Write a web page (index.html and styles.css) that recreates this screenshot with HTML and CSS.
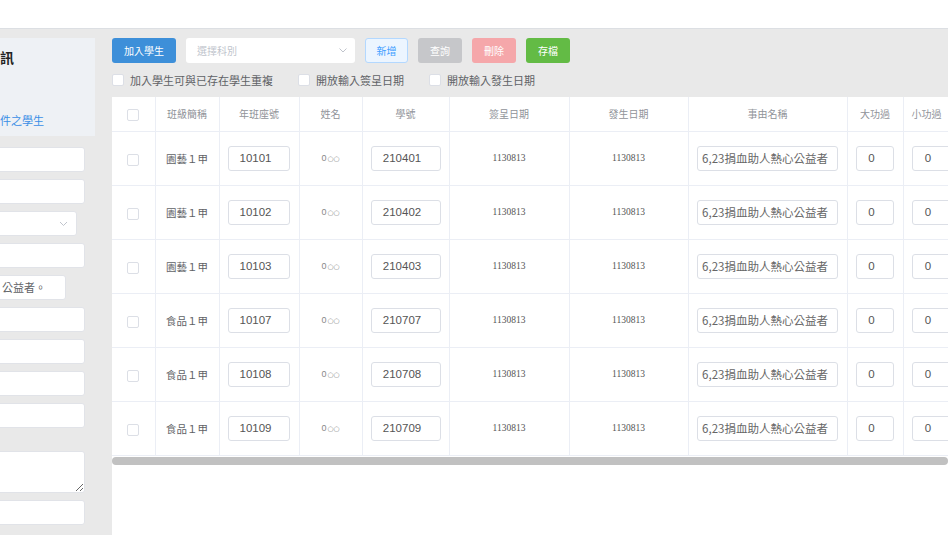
FILE: index.html
```html
<!DOCTYPE html>
<html lang="zh-Hant">
<head>
    <meta charset="UTF-8">
    <meta name="viewport" content="width=device-width, initial-scale=1.0">
    <title>獎懲登錄</title>
    <link rel="stylesheet" href="styles.css">
</head>
<body>
    <div class="topbar"></div>

    <div class="page">
        <aside class="side">
            <div class="side-inner">
                <div class="info-box">
                    <h3 class="info-title">訊</h3>
                    <a class="info-link" href="#">件之學生</a>
                </div>

                <div class="form">
                    <input class="field" type="text">
                    <input class="field" type="text">
                    <div class="field field-select">
                        <svg class="chev" width="9" height="6" viewBox="0 0 9 6"><polyline points="1,1 4.5,4.5 8,1" fill="none" stroke="#c0c4cc" stroke-width="1"/></svg>
                    </div>
                    <input class="field" type="text">
                    <div class="field field-short">公益者。</div>
                    <input class="field" type="text">
                    <input class="field" type="text">
                    <input class="field" type="text">
                    <input class="field" type="text">
                    <textarea class="field field-area"></textarea>
                    <input class="field" type="text">
                </div>
            </div>
        </aside>

        <main class="main">
            <div class="toolbar">
                <button class="btn btn-primary">加入學生</button>
                <div class="select">
                    <span>選擇科別</span>
                    <svg width="8" height="5" viewBox="0 0 8 5"><polyline points="0.5,0.5 4,4 7.5,0.5" fill="none" stroke="#c0c4cc" stroke-width="1"/></svg>
                </div>
                <button class="btn btn-plain">新增</button>
                <button class="btn btn-gray">查詢</button>
                <button class="btn btn-red">刪除</button>
                <button class="btn btn-green">存檔</button>
            </div>

            <div class="options">
                <label class="opt"><span class="check"></span>加入學生可與已存在學生重複</label>
                <label class="opt"><span class="check"></span>開放輸入簽呈日期</label>
                <label class="opt"><span class="check"></span>開放輸入發生日期</label>
            </div>

            <div class="table-wrap">
                <div class="table-scroll">
                    <table class="grid">
                        <colgroup>
                            <col style="width:43px"><col style="width:64px"><col style="width:80px">
                            <col style="width:63px"><col style="width:87px"><col style="width:120px">
                            <col style="width:119px"><col style="width:159px"><col style="width:56px">
                            <col style="width:70px">
                        </colgroup>
                        <thead>
                            <tr>
                                <th><span class="check"></span></th>
                                <th>班級簡稱</th>
                                <th>年班座號</th>
                                <th>姓名</th>
                                <th>學號</th>
                                <th>簽呈日期</th>
                                <th>發生日期</th>
                                <th>事由名稱</th>
                                <th>大功過</th>
                                <th class="left">小功過</th>
                            </tr>
                        </thead>
                        <tbody>
                            <tr>
                                <td><span class="check"></span></td>
                                <td>園藝１甲</td>
                                <td><input class="cell-in w-seat" value="10101"></td>
                                <td class="name">0<span class="oo">○○</span></td>
                                <td><input class="cell-in w-id" value="210401"></td>
                                <td class="date">1130813</td>
                                <td class="date">1130813</td>
                                <td><input class="cell-in w-reason" value="6,23捐血助人熱心公益者"></td>
                                <td><input class="cell-in w-num" value="0"></td>
                                <td class="left"><input class="cell-in w-num2" value="0"></td>
                            </tr>
                            <tr>
                                <td><span class="check"></span></td>
                                <td>園藝１甲</td>
                                <td><input class="cell-in w-seat" value="10102"></td>
                                <td class="name">0<span class="oo">○○</span></td>
                                <td><input class="cell-in w-id" value="210402"></td>
                                <td class="date">1130813</td>
                                <td class="date">1130813</td>
                                <td><input class="cell-in w-reason" value="6,23捐血助人熱心公益者"></td>
                                <td><input class="cell-in w-num" value="0"></td>
                                <td class="left"><input class="cell-in w-num2" value="0"></td>
                            </tr>
                            <tr>
                                <td><span class="check"></span></td>
                                <td>園藝１甲</td>
                                <td><input class="cell-in w-seat" value="10103"></td>
                                <td class="name">0<span class="oo">○○</span></td>
                                <td><input class="cell-in w-id" value="210403"></td>
                                <td class="date">1130813</td>
                                <td class="date">1130813</td>
                                <td><input class="cell-in w-reason" value="6,23捐血助人熱心公益者"></td>
                                <td><input class="cell-in w-num" value="0"></td>
                                <td class="left"><input class="cell-in w-num2" value="0"></td>
                            </tr>
                            <tr>
                                <td><span class="check"></span></td>
                                <td>食品１甲</td>
                                <td><input class="cell-in w-seat" value="10107"></td>
                                <td class="name">0<span class="oo">○○</span></td>
                                <td><input class="cell-in w-id" value="210707"></td>
                                <td class="date">1130813</td>
                                <td class="date">1130813</td>
                                <td><input class="cell-in w-reason" value="6,23捐血助人熱心公益者"></td>
                                <td><input class="cell-in w-num" value="0"></td>
                                <td class="left"><input class="cell-in w-num2" value="0"></td>
                            </tr>
                            <tr>
                                <td><span class="check"></span></td>
                                <td>食品１甲</td>
                                <td><input class="cell-in w-seat" value="10108"></td>
                                <td class="name">0<span class="oo">○○</span></td>
                                <td><input class="cell-in w-id" value="210708"></td>
                                <td class="date">1130813</td>
                                <td class="date">1130813</td>
                                <td><input class="cell-in w-reason" value="6,23捐血助人熱心公益者"></td>
                                <td><input class="cell-in w-num" value="0"></td>
                                <td class="left"><input class="cell-in w-num2" value="0"></td>
                            </tr>
                            <tr>
                                <td><span class="check"></span></td>
                                <td>食品１甲</td>
                                <td><input class="cell-in w-seat" value="10109"></td>
                                <td class="name">0<span class="oo">○○</span></td>
                                <td><input class="cell-in w-id" value="210709"></td>
                                <td class="date">1130813</td>
                                <td class="date">1130813</td>
                                <td><input class="cell-in w-reason" value="6,23捐血助人熱心公益者"></td>
                                <td><input class="cell-in w-num" value="0"></td>
                                <td class="left"><input class="cell-in w-num2" value="0"></td>
                            </tr>
                        </tbody>
                    </table>
                </div>
                <div class="scroll-bar"></div>
            </div>
        </main>
    </div>
</body>
</html>
```

FILE: styles.css
```css
*{
    margin: 0;
    padding: 0;
    box-sizing: border-box;
}

body{
    height: 535px;
    overflow: hidden;
    background-color: #e9e9e9;
    color: #606266;
    font-family: "Noto Sans CJK TC", "Noto Sans", sans-serif;
}

.topbar{
    height: 29px;
    background-color: #fff;
    border-bottom: 1px solid #dcdfe3;
}

.page{
    display: flex;
    height: 506px;
}

/* left column, scrolled so only its right edge shows */
.side{
    width: 112px;
    flex: none;
    overflow: hidden;
    padding-top: 9px;
}

.side-inner{
    width: 300px;
    margin-left: -205px;
}

.info-box{
    height: 98px;
    background-color: #eef1f5;
    padding-top: 9px;
}

.info-title{
    font-size: 14px;
    line-height: 20px;
    font-weight: bold;
    color: #222;
    text-align: right;
    padding-right: 81px;
}

.info-link{
    display: block;
    margin-top: 45px;
    padding-right: 51px;
    font-size: 11px;
    line-height: 16px;
    color: #3a8ee6;
    text-align: right;
    text-decoration: none;
}

.form{
    display: flex;
    flex-direction: column;
    padding-top: 11px;
}

.field{
    display: block;
    width: 290px;
    height: 25px;
    margin-bottom: 7px;
    background-color: #fff;
    border: 1px solid #e1e3e8;
    border-radius: 3px;
    font-family: "Noto Sans CJK TC", sans-serif;
    font-size: 11px;
    color: #606266;
    outline: none;
}

.field-select{
    width: 282px;
    display: flex;
    align-items: center;
    justify-content: flex-end;
    padding-right: 8px;
}

.field-short{
    width: 271px;
    text-align: right;
    padding-right: 19px;
    line-height: 23px;
}

.field-area{
    height: 42px;
    margin-top: 16px;
    resize: vertical;
}

/* main area */
.main{
    flex: 1;
    min-width: 0;
    padding-top: 9px;
    display: flex;
    flex-direction: column;
}

.toolbar{
    display: flex;
    align-items: center;
    gap: 10px;
    height: 25px;
}

.btn{
    height: 25px;
    width: 44px;
    border: 1px solid transparent;
    border-radius: 3px;
    font-family: "Noto Sans CJK TC", sans-serif;
    font-size: 10px;
    color: #fff;
    cursor: pointer;
}

.btn-primary{
    width: 64px;
    background-color: #3d8fd9;
}

.btn-plain{
    width: 43px;
    background-color: #ecf5ff;
    border-color: #b3d8ff;
    color: #409eff;
}

.btn-gray{
    background-color: #c6c7ca;
}

.btn-red{
    background-color: #f5a7aa;
}

.btn-green{
    background-color: #63bb45;
}

.select{
    width: 169px;
    height: 25px;
    display: flex;
    align-items: center;
    justify-content: space-between;
    padding: 0 8px 0 11px;
    background-color: #fff;
    border-radius: 3px;
    font-size: 10px;
    color: #c0c4cc;
}

.options{
    display: flex;
    align-items: center;
    gap: 25px;
    height: 14px;
    margin-top: 10px;
    font-size: 11px;
    color: #606266;
}

.opt{
    display: flex;
    align-items: center;
    gap: 6px;
}

.check{
    display: inline-block;
    width: 12px;
    height: 12px;
    background-color: #fff;
    border: 1px solid #dcdfe6;
    border-radius: 2px;
    vertical-align: middle;
}

.table-wrap{
    flex: 1;
    margin-top: 10px;
    background-color: #fff;
    overflow: hidden;
}

.table-scroll{
    overflow: hidden;
}

.grid{
    border-collapse: collapse;
    table-layout: fixed;
    width: 861px;
}

.grid th,
.grid td{
    border-right: 1px solid #ebeef5;
    border-bottom: 1px solid #ebeef5;
    text-align: center;
    vertical-align: middle;
}

.grid th{
    height: 34px;
    font-size: 10px;
    font-weight: normal;
    color: #909399;
}

.grid td{
    height: 54px;
    font-size: 10.5px;
    color: #606266;
}

.grid .left{
    text-align: left;
    padding-left: 8px;
}

.grid td.name{
    font-family: "Liberation Sans", sans-serif;
    font-size: 9px;
    color: #888;
}

.grid td.name .oo{
    font-family: "DejaVu Sans", sans-serif;
    font-size: 7px;
    margin-left: 1px;
}

.grid td.date{
    font-family: "Liberation Serif", serif;
    font-size: 9.5px;
    color: #555;
}

.cell-in{
    height: 25px;
    border: 1px solid #dcdfe6;
    border-radius: 3px;
    padding: 0 8px 0 1px;
    text-align: center;
    font-family: "Liberation Sans", "Noto Sans CJK TC", sans-serif;
    font-size: 11.5px;
    color: #555;
    outline: none;
}

.w-seat{ width: 62px; }
.w-id{ width: 70px; }
.w-num{ width: 38px; }
.w-num2{ width: 40px; }

.w-reason{
    width: 141px;
    font-family: "Noto Sans CJK TC", sans-serif;
    font-size: 11.5px;
    color: #666;
    padding-right: 6px;
}

.scroll-bar{
    height: 8px;
    margin-top: 1px;
    background-color: #c1c1c1;
    border-radius: 4px;
}
```
